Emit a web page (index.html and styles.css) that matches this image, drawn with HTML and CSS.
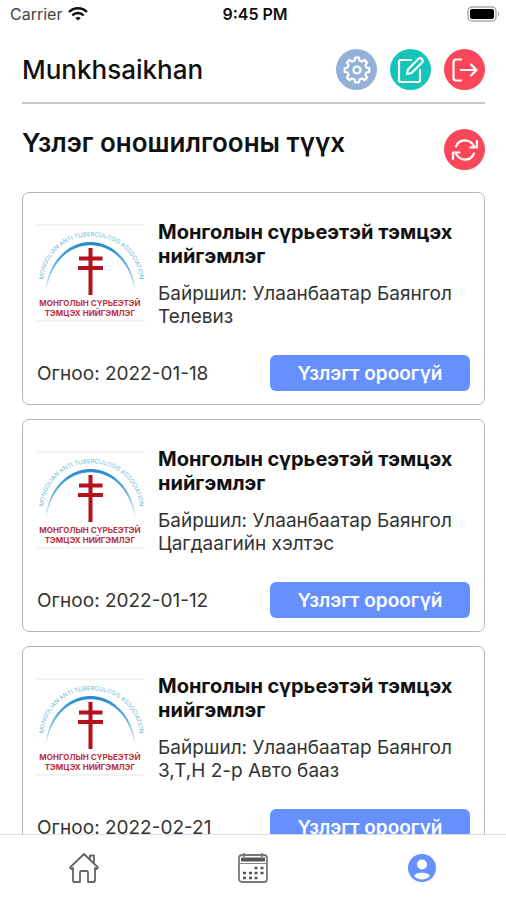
FILE: index.html
```html
<!DOCTYPE html>
<html lang="mn">
<head>
    <meta charset="UTF-8">
    <meta name="viewport" content="width=device-width, initial-scale=1.0">
    <title>Үзлэг оношилгооны түүх</title>
    <link rel="stylesheet" href="styles.css">
</head>
<body>
    <div class="status-bar">
        <div class="carrier">
            <span>Carrier</span>
            <svg width="20" height="14" viewBox="0 0 20 14" fill="none" stroke="#111" stroke-width="2.4">
                <path d="M1 5C6 0 14 0 19 5M4.3 8.3C7.5 5.2 12.5 5.2 15.7 8.3"/>
                <path d="M7.2 11C8.8 9.5 11.2 9.5 12.800 11L10 13.6Z" fill="#111" stroke="none"/>
            </svg>
        </div>
        <div class="clock">9:45 PM</div>
        <div class="battery">
            <svg width="33" height="16" viewBox="0 0 33 16">
                <rect x="1" y="1" width="28" height="14" rx="4" fill="#fff" stroke="#aaa" stroke-width="1.5"/>
                <rect x="3" y="3" width="24" height="10" rx="2" fill="#000"/>
                <path d="M31 5.500C32.600 6.500 32.600 9.500 31 10.500Z" fill="#aaa"/>
            </svg>
        </div>
    </div>

    <header class="header">
        <h1 class="user-name">Munkhsaikhan</h1>
        <div class="actions">
            <button class="icon-btn settings" aria-label="Тохиргоо">
                <svg width="28" height="28" viewBox="0 0 28 28">
                    <path d="M26.300 12V16L23.500 16.400L22.400 19L24.100 21.400L21.400 24.100L19 22.400L16.400 23.500L16 26.300H12L11.600 23.500L9 22.400L6.600 24.100L3.900 21.400L5.600 19L4.500 16.400L1.700 16V12L4.500 11.600L5.600 9L3.900 6.600L6.600 3.900L9 5.600L11.600 4.500L12 1.700H16L16.400 4.500L19 5.600L21.400 3.900L24.100 6.600L22.400 9L23.500 11.600Z"/>
                    <circle cx="14" cy="14" r="3.500"/>
                </svg>
            </button>
            <button class="icon-btn edit" aria-label="Засах">
                <svg width="28" height="28" viewBox="0 0 28 28">
                    <path d="M14 4H4C3 4 2 5 2 6V24C2 25 3 26 4 26H21C22 26 23 25 23 24V14"/>
                    <path d="M10 18L11 13.500L21.700 2.600C24 1 27 4 25.300 6.200L14.600 17Z"/>
                </svg>
            </button>
            <button class="icon-btn logout" aria-label="Гарах">
                <svg width="28" height="28" viewBox="0 0 28 28">
                    <path d="M10 3.500H5C3.500 3.500 2.500 4.500 2.500 6V22C2.500 23.500 3.500 24.500 5 24.500H10M10 14H25M20 8.500L25.500 14L20 19.500"/>
                </svg>
            </button>
        </div>
    </header>

    <main class="content">
        <div class="section-head">
            <h2 class="section-title">Үзлэг оношилгооны түүх</h2>
            <button class="icon-btn refresh" aria-label="Шинэчлэх">
                <svg width="28" height="28" viewBox="0 0 28 28">
                    <path d="M5 10.500C8 3 18 2 23 10M26 5V11.500H19.500M23 17.500C20 25 10 26 5 18M2 23V16.500H8.500"/>
                </svg>
            </button>
        </div>

        <article class="card">
            <div class="card-info">
                <svg class="logo" viewBox="0 0 108 98" role="img" aria-label="Лого">
                    <defs>
                        <linearGradient id="arcFade" x1="0" y1="0" x2="0" y2="1">
                            <stop offset="0" stop-color="#2387cc"/>
                            <stop offset="0.5" stop-color="#5fb0e0"/>
                            <stop offset="1" stop-color="#e4f5fc"/>
                        </linearGradient>
                        <path id="ring" d="M6 58C10 -3 98 -3 103 58"/>
                    </defs>
                    <!-- Association logo, reused in the other cards -->
                    <g id="logo">
                        <path d="M0 1H108M0 97H108" stroke="#e6e6e6" stroke-width="1"/>
                        <text class="logo-ring"><textPath href="#ring" startOffset="50%" text-anchor="middle">MONGOLIAN ANTI TUBERCULOSIS ASSOCIATION</textPath></text>
                        <path d="M9 65C18 3 89 3 98 65C87 6 20 6 9 65Z" fill="url(#arcFade)" stroke="url(#arcFade)" stroke-width="1"/>
                        <path d="M53.500 24V71M42 34.500H65.500M41 44H66" stroke="#b3121d" stroke-width="4"/>
                        <text class="logo-name" x="53" y="82" text-anchor="middle">МОНГОЛЫН СҮРЬЕЭТЭЙ</text>
                        <text class="logo-name" x="53" y="92" text-anchor="middle">ТЭМЦЭХ НИЙГЭМЛЭГ</text>
                    </g>
                </svg>
                <div class="card-text">
                    <h3 class="org">Монголын сүрьеэтэй тэмцэх нийгэмлэг</h3>
                    <p class="address">Байршил: Улаанбаатар Баянгол Телевиз</p>
                </div>
            </div>
            <div class="card-foot">
                <span class="date">Огноо: 2022-01-18</span>
                <button class="status-btn">Үзлэгт ороогүй</button>
            </div>
        </article>

        <article class="card">
            <div class="card-info">
                <svg class="logo" viewBox="0 0 108 98" role="img" aria-label="Лого"><use href="#logo"/></svg>
                <div class="card-text">
                    <h3 class="org">Монголын сүрьеэтэй тэмцэх нийгэмлэг</h3>
                    <p class="address">Байршил: Улаанбаатар Баянгол Цагдаагийн хэлтэс</p>
                </div>
            </div>
            <div class="card-foot">
                <span class="date">Огноо: 2022-01-12</span>
                <button class="status-btn">Үзлэгт ороогүй</button>
            </div>
        </article>

        <article class="card">
            <div class="card-info">
                <svg class="logo" viewBox="0 0 108 98" role="img" aria-label="Лого"><use href="#logo"/></svg>
                <div class="card-text">
                    <h3 class="org">Монголын сүрьеэтэй тэмцэх нийгэмлэг</h3>
                    <p class="address">Байршил: Улаанбаатар Баянгол З,Т,Н 2-р Авто бааз</p>
                </div>
            </div>
            <div class="card-foot">
                <span class="date">Огноо: 2022-02-21</span>
                <button class="status-btn">Үзлэгт ороогүй</button>
            </div>
        </article>
    </main>

    <nav class="tab-bar">
        <a class="tab" href="#home" aria-label="Нүүр">
            <svg width="32" height="32" viewBox="0 0 32 32" fill="none" stroke="#666" stroke-width="1.8" stroke-linejoin="round">
                <path d="M2 15.500L16 2L30 15.500L28.500 17L27 16V28C27 29.500 26.500 30 25.500 30H20V20.500C20 19.500 19.500 19 18.500 19H13.500C12.500 19 12 19.500 12 20.500V30H6.500C5.500 30 5 29.500 5 28.500V16L3.500 17Z"/>
                <path d="M22 7.500V3.500H26V11.500"/>
            </svg>
        </a>
        <a class="tab" href="#calendar" aria-label="Хуанли">
            <svg width="32" height="32" viewBox="0 0 32 32" fill="none" stroke="#555" stroke-width="1.8">
                <rect x="2" y="3" width="28" height="27" rx="3" stroke="#777"/>
                <path d="M4 7.500H28" stroke-width="4"/>
                <path d="M3 11.500H29" stroke="#888" stroke-width="1"/>
                <path d="M7 1V5M25 1V5" stroke="#777"/>
                <path d="M17.500 16H20.500M23.500 16H26.500M6 21H9M12 21H15M17.500 21H20.500M23.500 21H26.500M6 26H9M12 26H15M17.500 26H20.500" stroke-width="2.5"/>
            </svg>
        </a>
        <a class="tab" href="#profile" aria-label="Профайл">
            <svg width="32" height="32" viewBox="0 0 32 32">
                <circle cx="16" cy="16" r="14" fill="#6690ff"/>
                <circle cx="16" cy="12.5" r="5" fill="#fff"/>
                <path d="M8 24C9.500 19.500 22.500 19.500 24 24C20 28.500 12 28.500 8 24Z" fill="#fff"/>
            </svg>
        </a>
    </nav>
</body>
</html>
```

FILE: styles.css
```css
* {
    box-sizing: border-box;
}
body {
    margin: 0;
    height: 100vh;
    display: flex;
    flex-direction: column;
    overflow: hidden;
    background-color: #fff;
    color: #111;
    font-family: Inter, "Noto Sans", sans-serif;
}
h1, h2, h3, p {
    margin: 0;
}
button {
    font-family: inherit;
    border: none;
    padding: 0;
    cursor: pointer;
}
.status-bar {
    display: grid;
    grid-template-columns: 1fr auto 1fr;
    align-items: center;
    padding: 0 6px 0 10px;
    height: 28px;
    font-size: 16px;
    flex: none;
}
.carrier {
    display: flex;
    align-items: center;
    gap: 6px;
    color: #444;
}
.clock {
    font-weight: 600;
}
.battery {
    display: flex;
    justify-content: flex-end;
}
.header {
    display: flex;
    align-items: center;
    justify-content: space-between;
    margin: 0 21px 0 22px;
    padding: 21px 0 12px;
    border-bottom: 2px solid #c8c8c8;
    flex: none;
}
.user-name {
    font-size: 26px;
    font-weight: 500;
}
.actions {
    display: flex;
    gap: 13px;
}
.icon-btn {
    width: 41px;
    height: 41px;
    border-radius: 50%;
    display: flex;
    align-items: center;
    justify-content: center;
    flex: none;
}
.icon-btn svg {
    fill: none;
    stroke: #fff;
    stroke-width: 2.2;
    stroke-linecap: round;
    stroke-linejoin: round;
}
.settings {
    background-color: #93b1d8;
}
.edit {
    background-color: #14c4b8;
}
.logout,
.refresh {
    background-color: #fa4659;
}
.content {
    flex: 1;
    min-height: 0;
    overflow: hidden;
    padding: 0 21px 0 22px;
}
.section-head {
    display: flex;
    align-items: flex-start;
    justify-content: space-between;
    padding: 25px 0 22px;
}
.section-title {
    font-size: 26px;
    font-weight: 600;
    line-height: 28px;
}
.card {
    border: 1px solid #b4b4b4;
    border-radius: 7px;
    padding: 27px 14px 13px;
    margin-bottom: 14px;
}
.card-info {
    display: flex;
    gap: 13px;
}
.logo {
    width: 108px;
    height: 98px;
    margin-top: 4px;
    flex: none;
}
.logo-ring {
    font-size: 6px;
    fill: #6db9d3;
}
.logo-name {
    font-size: 8px;
    font-weight: 700;
    fill: #b8323c;
}
.org {
    font-size: 20px;
    font-weight: 700;
    line-height: 24px;
}
.address {
    margin-top: 14px;
    font-size: 19px;
    line-height: 23px;
    color: #333;
}
.card-foot {
    display: flex;
    align-items: center;
    justify-content: space-between;
    margin-top: 27px;
}
.date {
    font-size: 19px;
    color: #333;
}
.status-btn {
    width: 200px;
    height: 36px;
    border-radius: 6px;
    background-color: #6690ff;
    color: #fff;
    font-size: 19px;
    font-weight: 600;
}
.tab-bar {
    display: flex;
    height: 66px;
    border-top: 1px solid #ddd;
    flex: none;
}
.tab {
    flex: 1;
    display: flex;
    align-items: center;
    justify-content: center;
}
```
